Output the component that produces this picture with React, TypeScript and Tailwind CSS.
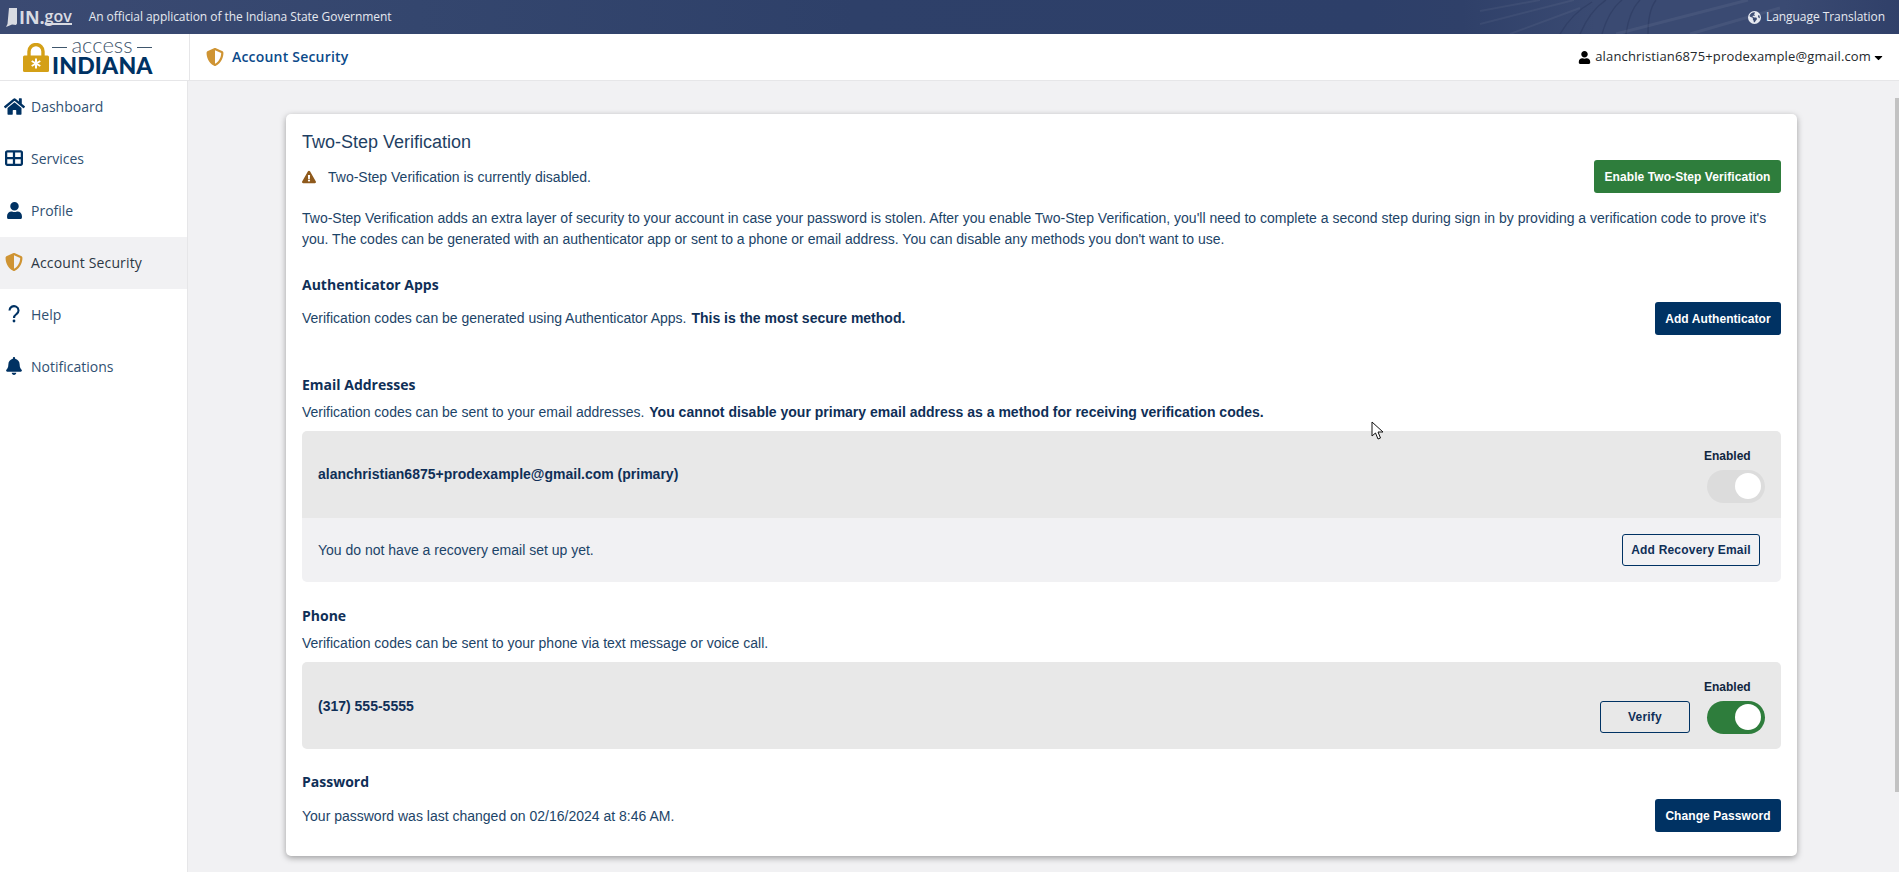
import { FaBell, FaCaretDown, FaExclamationTriangle, FaHome, FaUser } from "react-icons/fa";
import { FaEarthAmericas, FaShieldHalved, FaTableCellsLarge } from "react-icons/fa6";
import type { ReactNode } from "react";

const nav = [
  { label: "Dashboard", icon: <FaHome className="text-[21px] text-[#003263]" /> },
  { label: "Services", icon: <FaTableCellsLarge className="text-[18px] text-[#003263]" /> },
  { label: "Profile", icon: <FaUser className="text-[17px] text-[#003263]" /> },
  { label: "Account Security", icon: <FaShieldHalved className="text-[18px] text-[#cf9433]" />, active: true },
  {
    label: "Help",
    icon: (
      <svg width="12" height="18" viewBox="0 0 12 18" aria-hidden>
        <path d="M1.5 5.5 a4.5 4.3 0 1 1 7 3.5 C6.8 10.2 6 11 6 13" fill="none" stroke="#003263" strokeWidth="2.1" />
        <circle cx="6" cy="16" r="1.4" fill="#003263" />
      </svg>
    ),
  },
  { label: "Notifications", icon: <FaBell className="text-[18px] text-[#003263]" /> },
];

function Heading({ children }: { children: ReactNode }) {
  return <h2 className="font-['Open_Sans',sans-serif] text-[14px] font-bold leading-[20px] text-[#0f2f57]">{children}</h2>;
}

function Toggle({ on }: { on: boolean }) {
  return (
    <div className={`flex h-[33px] w-[58px] items-center justify-end rounded-full pr-[4px] ${on ? "bg-[#2e7d3c]" : "bg-[#dcdcdc]"}`}>
      <div className="h-[26px] w-[26px] rounded-full bg-white" />
    </div>
  );
}

function EnabledToggle({ on }: { on: boolean }) {
  return (
    <div className="flex flex-col items-start">
      <span className="-ml-[3px] text-[12px] font-bold leading-[18px] text-[#10263f]">Enabled</span>
      <div className="mt-[5px]"><Toggle on={on} /></div>
    </div>
  );
}

function OutlineButton({ children, className }: { children: ReactNode; className: string }) {
  return (
    <button className={`h-[32px] rounded-[3px] border border-[#003263] text-[12px] font-bold tracking-[0.2px] text-[#0f2f57] ${className}`}>
      {children}
    </button>
  );
}

function SolidButton({ children, className }: { children: ReactNode; className: string }) {
  return <button className={`h-[33px] rounded-[3px] text-[12px] font-bold tracking-[0.08px] text-white ${className}`}>{children}</button>;
}

export default function App() {
  return (
    <div className="relative flex h-[872px] w-[1899px] flex-col overflow-hidden bg-[#f1f1f3] font-['Liberation_Sans',Arial,sans-serif]">
      {/* state banner */}
      <div className="relative flex h-[34px] shrink-0 items-center justify-between overflow-hidden bg-[linear-gradient(90deg,#3b4a72_0%,#34466e_22%,#2e4069_45%,#2d3f69_72%,#2f4069_77%,#3a4a72_84%,#3a4a72_94%,#304069_100%)] pl-[6px] pr-[14px] font-['Open_Sans',sans-serif] text-[12px] tracking-[-0.05px] text-[#e6e9f0]">
        <svg className="pointer-events-none absolute left-[1480px] top-0" width="419" height="34" viewBox="0 0 419 34" aria-hidden>
          <path d="M0 11 L60 0 M0 24 L94 0 M30 34 L100 8" stroke="#ffffff" strokeOpacity="0.05" strokeWidth="2" fill="none" />
          <path d="M80 34 C88 20 98 10 112 2 M100 34 C106 20 114 8 126 0 M122 34 C126 20 132 8 142 0 M146 34 C148 20 152 8 160 0 M168 34 C168 20 170 8 176 0" stroke="#27365c" strokeOpacity="0.45" strokeWidth="1.4" fill="none" />
          <path d="M136 34 L268 0 M210 34 L300 8" stroke="#ffffff" strokeOpacity="0.06" strokeWidth="3" fill="none" />
        </svg>
        <div className="relative flex items-center">
          <svg width="12" height="19" viewBox="0 0 12 19" aria-hidden>
            <path d="M3 0 H11 V15.5 L10 17 L6 16.5 L2.5 18 L0 19 L1.5 16 Z" fill="#d9dbe2" />
          </svg>
          <span className="ml-[1px] text-[18px] font-bold leading-none text-[#d9dbe2]">IN</span>
          <span className="text-[18px] font-bold leading-none text-[#d9dbe2]">.</span>
          <span className="border-b-2 border-[#d9dbe2] text-[16px] font-semibold leading-[13px] text-[#d9dbe2]">gov</span>
          <span className="ml-[17px]">An official application of the Indiana State Government</span>
        </div>
        <div className="relative flex items-center gap-[5px]">
          <FaEarthAmericas className="text-[13px]" />
          <span>Language Translation</span>
        </div>
      </div>

      {/* header */}
      <div className="flex h-[47px] shrink-0 items-center justify-between border-b border-[#e6e6e8] bg-white pr-[14px]">
        <div className="flex h-full items-center">
          <div className="flex h-full w-[190px] items-center gap-[3px] border-r border-[#e6e6e8] pl-[23px]">
            <svg className="mt-[1px]" width="26" height="29" viewBox="0 0 26 29" aria-hidden>
              <path d="M6 14 V8.5 a7 7 0 0 1 14 0 V14" fill="none" stroke="#d4a017" strokeWidth="3.4" />
              <rect x="0" y="12.5" width="26" height="16.5" rx="1.5" fill="#d4a017" />
              <path d="M13 15.5 V25.5 M8.7 18 L17.3 23 M17.3 18 L8.7 23" stroke="#ffffff" strokeWidth="2" />
            </svg>
            <div className="flex w-[100px] flex-col items-stretch pb-[4px]">
              <div className="flex items-center justify-between font-['Lato',sans-serif] text-[22px] font-light leading-[16px] text-[#3f566c]">
                <span className="mt-[6px] h-[1.5px] w-[15px] bg-[#3f566c]" />
                access
                <span className="mt-[6px] h-[1.5px] w-[15px] bg-[#3f566c]" />
              </div>
              <div className="mt-[3px] font-['Lato',sans-serif] text-[23px] font-black leading-[18px] tracking-[0.2px] text-[#003263]">INDIANA</div>
            </div>
          </div>
          <div className="ml-[16px] flex items-center gap-[8px] pb-[1px]">
            <FaShieldHalved className="text-[18px] text-[#cf9433]" />
            <span className="font-['Open_Sans',sans-serif] text-[14px] font-semibold tracking-[0.2px] text-[#0b4a8a]">Account Security</span>
          </div>
        </div>
        <div className="flex items-center font-['Open_Sans',sans-serif] text-[13px] tracking-[0.15px] text-[#24282c]">
          <FaUser className="mr-[4px] text-[13px] text-black" />
          alanchristian6875+prodexample@gmail.com
          <FaCaretDown className="ml-[1px] text-[13px] text-black" />
        </div>
      </div>

      <div className="flex min-h-0 flex-1">
        {/* sidebar */}
        <aside className="w-[188px] shrink-0 border-r border-[#e6e6e8] bg-white font-['Open_Sans',sans-serif] text-[14px]">
          {nav.map((item) => (
            <div key={item.label} className={`flex h-[52px] items-center pb-[2px] ${item.active ? "bg-[#f1f1f3] tracking-[0.15px] text-[#2c3744]" : "text-[#2f5072]"}`}>
              <span className="flex w-[31px] shrink-0 justify-center pl-[2px] pr-[5px]">{item.icon}</span>
              {item.label}
            </div>
          ))}
        </aside>

        {/* main */}
        <main className="min-w-0 flex-1 pl-[98px] pr-[102px] pt-[33px]">
          <div className="h-[742px] rounded-[5px] bg-white px-[16px] pt-[16px] text-[14px] leading-[20px] text-[#1c4468] shadow-[0_2px_6px_rgba(0,0,0,0.35)]">
            <h1 className="text-[18px] leading-[24px] text-[#1f3f63]">Two-Step Verification</h1>

            <div className="mt-[6px] flex h-[33px] items-center justify-between">
              <div className="flex items-center">
                <FaExclamationTriangle className="mr-[12px] text-[14px] text-[#8f5a1c]" />
                Two-Step Verification is currently disabled.
              </div>
              <SolidButton className="w-[187px] bg-[#2e7d3c]">Enable Two-Step Verification</SolidButton>
            </div>

            <p className="mt-[15px] leading-[21px]">
              Two-Step Verification adds an extra layer of security to your account in case your password is stolen. After you enable Two-Step Verification, you'll need to complete a second step during sign in by providing a verification code to prove it's you. The codes can be generated with an authenticator app or sent to a phone or email address. You can disable any methods you don't want to use.
            </p>

            <div className="mt-[25px]">
              <Heading>Authenticator Apps</Heading>
            </div>
            <div className="mt-[7px] flex h-[33px] items-center justify-between">
              <div className="pb-[2px]">
                Verification codes can be generated using Authenticator Apps. <b className="ml-[1px] text-[#0f2f57]">This is the most secure method.</b>
              </div>
              <SolidButton className="w-[126px] bg-[#003263]">Add Authenticator</SolidButton>
            </div>

            <div className="mt-[40px]">
              <Heading>Email Addresses</Heading>
            </div>
            <div className="mt-[7px]">
              Verification codes can be sent to your email addresses. <b className="ml-[1px] text-[#0f2f57]">You cannot disable your primary email address as a method for receiving verification codes.</b>
            </div>
            <div className="mt-[9px] overflow-hidden rounded-[5px]">
              <div className="flex h-[87px] items-center justify-between bg-[#e8e8e8] pl-[16px] pr-[16px]">
                <b className="pb-[2px] text-[#0f2f57]">alanchristian6875+prodexample@gmail.com (primary)</b>
                <EnabledToggle on={false} />
              </div>
              <div className="flex h-[64px] items-center justify-between bg-[#f1f1f3] pl-[16px] pr-[21px]">
                You do not have a recovery email set up yet.
                <OutlineButton className="w-[138px]">Add Recovery Email</OutlineButton>
              </div>
            </div>

            <div className="mt-[24px]">
              <Heading>Phone</Heading>
            </div>
            <div className="mt-[7px]">Verification codes can be sent to your phone via text message or voice call.</div>
            <div className="mt-[9px] flex h-[87px] items-center justify-between rounded-[5px] bg-[#e8e8e8] pl-[16px] pr-[16px]">
              <b className="text-[#0f2f57]">(317) 555-5555</b>
              <div className="flex items-end gap-[17px]">
                <OutlineButton className="mb-[1px] w-[90px]">Verify</OutlineButton>
                <EnabledToggle on />
              </div>
            </div>

            <div className="mt-[23px]">
              <Heading>Password</Heading>
            </div>
            <div className="mt-[7px] flex h-[33px] items-center justify-between">
              Your password was last changed on 02/16/2024 at 8:46 AM.
              <SolidButton className="w-[126px] bg-[#003263]">Change Password</SolidButton>
            </div>
          </div>
        </main>
      </div>

      {/* page scrollbar */}
      <div className="absolute right-0 top-[98px] h-[694px] w-[4px] bg-[#c2c2c2]" />

      {/* mouse pointer */}
      <svg className="absolute left-[1371px] top-[421px]" width="14" height="20" viewBox="0 0 14 20" aria-hidden>
        <path d="M1 1 L1 15 L4.5 12 L7 18 L9.5 17 L7 11 L12 11 Z" fill="#ffffff" stroke="#111111" strokeWidth="1" />
      </svg>
    </div>
  );
}
